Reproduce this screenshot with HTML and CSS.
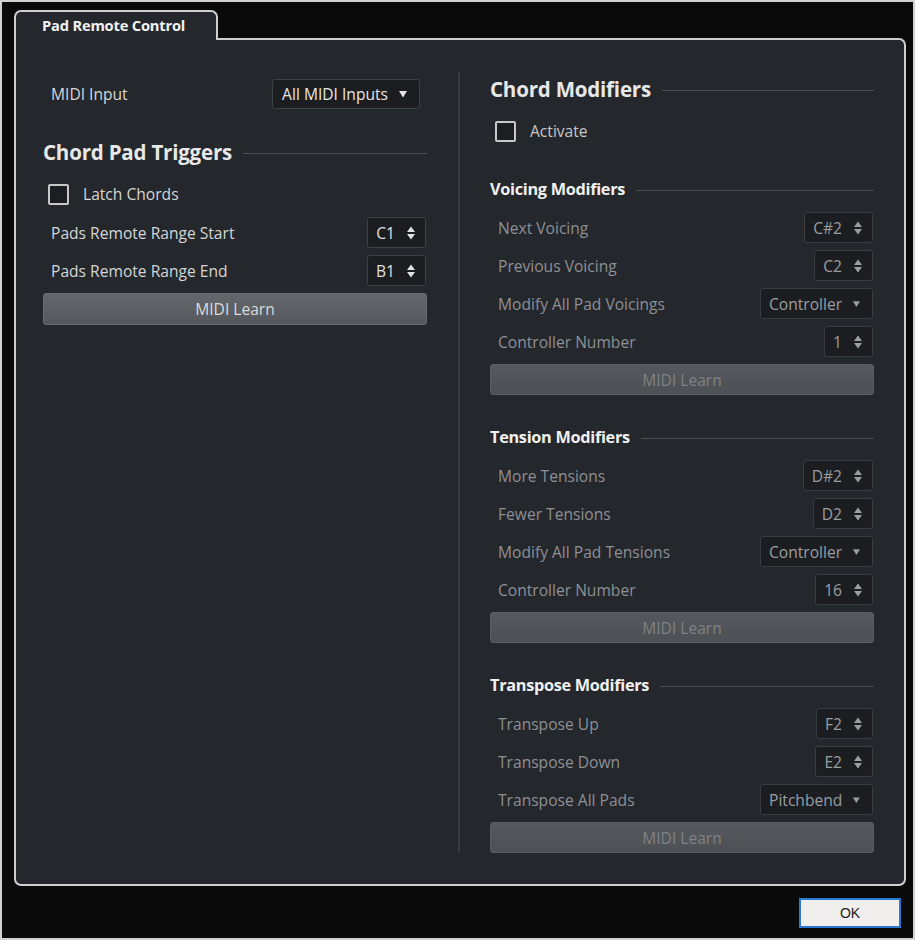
FILE: index.html
```html
<!DOCTYPE html>
<html>
<head>
<meta charset="utf-8">
<link rel="stylesheet" href="styles.css">
</head>
<body>
<div class="window">
  <div class="tabs">
    <div class="tab">Pad Remote Control</div>
  </div>
  <div class="panel">
    <div class="cols">
      <div class="col">
        <div class="row first">
          <span class="label">MIDI Input</span>
          <span class="box drop midi-drop">All MIDI Inputs<svg class="tri" viewBox="0 0 10 8"><path d="M1 1h8L5 7.5z"/></svg></span>
        </div>
        <div class="h2 left-h2"><span>Chord Pad Triggers</span><i class="rule"></i></div>
        <div class="check-row"><span class="cb"></span><span class="cb-label">Latch Chords</span></div>
        <div class="rows first-rows">
          <div class="row"><span class="label">Pads Remote Range Start</span><span class="box spin">C1<svg class="arr" viewBox="0 0 10 16"><path d="M1 7L5 1.5 9 7zM1 9l4 5.5L9 9z"/></svg></span></div>
          <div class="row"><span class="label">Pads Remote Range End</span><span class="box spin">B1<svg class="arr" viewBox="0 0 10 16"><path d="M1 7L5 1.5 9 7zM1 9l4 5.5L9 9z"/></svg></span></div>
          <div class="btn">MIDI Learn</div>
        </div>
      </div>
      <div class="divider"></div>
      <div class="col dim">
        <div class="h2 right-h2"><span>Chord Modifiers</span><i class="rule"></i></div>
        <div class="check-row"><span class="cb"></span><span class="cb-label act">Activate</span></div>

        <div class="h3 first-h3"><span>Voicing Modifiers</span><i class="rule"></i></div>
        <div class="rows">
          <div class="row"><span class="label">Next Voicing</span><span class="box spin">C#2<svg class="arr" viewBox="0 0 10 16"><path d="M1 7L5 1.5 9 7zM1 9l4 5.5L9 9z"/></svg></span></div>
          <div class="row"><span class="label">Previous Voicing</span><span class="box spin">C2<svg class="arr" viewBox="0 0 10 16"><path d="M1 7L5 1.5 9 7zM1 9l4 5.5L9 9z"/></svg></span></div>
          <div class="row"><span class="label">Modify All Pad Voicings</span><span class="box drop sel">Controller<svg class="tri" viewBox="0 0 10 8"><path d="M1 1h8L5 7.5z"/></svg></span></div>
          <div class="row"><span class="label">Controller Number</span><span class="box spin">1<svg class="arr" viewBox="0 0 10 16"><path d="M1 7L5 1.5 9 7zM1 9l4 5.5L9 9z"/></svg></span></div>
          <div class="btn off">MIDI Learn</div>
        </div>

        <div class="h3"><span>Tension Modifiers</span><i class="rule"></i></div>
        <div class="rows">
          <div class="row"><span class="label">More Tensions</span><span class="box spin">D#2<svg class="arr" viewBox="0 0 10 16"><path d="M1 7L5 1.5 9 7zM1 9l4 5.5L9 9z"/></svg></span></div>
          <div class="row"><span class="label">Fewer Tensions</span><span class="box spin">D2<svg class="arr" viewBox="0 0 10 16"><path d="M1 7L5 1.5 9 7zM1 9l4 5.5L9 9z"/></svg></span></div>
          <div class="row"><span class="label">Modify All Pad Tensions</span><span class="box drop sel">Controller<svg class="tri" viewBox="0 0 10 8"><path d="M1 1h8L5 7.5z"/></svg></span></div>
          <div class="row"><span class="label">Controller Number</span><span class="box spin">16<svg class="arr" viewBox="0 0 10 16"><path d="M1 7L5 1.5 9 7zM1 9l4 5.5L9 9z"/></svg></span></div>
          <div class="btn off">MIDI Learn</div>
        </div>

        <div class="h3"><span>Transpose Modifiers</span><i class="rule"></i></div>
        <div class="rows">
          <div class="row"><span class="label">Transpose Up</span><span class="box spin">F2<svg class="arr" viewBox="0 0 10 16"><path d="M1 7L5 1.5 9 7zM1 9l4 5.5L9 9z"/></svg></span></div>
          <div class="row"><span class="label">Transpose Down</span><span class="box spin">E2<svg class="arr" viewBox="0 0 10 16"><path d="M1 7L5 1.5 9 7zM1 9l4 5.5L9 9z"/></svg></span></div>
          <div class="row"><span class="label">Transpose All Pads</span><span class="box drop sel">Pitchbend<svg class="tri" viewBox="0 0 10 8"><path d="M1 1h8L5 7.5z"/></svg></span></div>
          <div class="btn off">MIDI Learn</div>
        </div>
      </div>
    </div>
  </div>
  <div class="footer">
    <div class="ok">OK</div>
  </div>
</div>
</body>
</html>
```

FILE: styles.css
```css
html, body {
  margin: 0;
  padding: 0;
  background: #0b0b0b;
}
body {
  font-family: "Open Sans", "Liberation Sans", sans-serif;
  font-size: 15.6px;
  color: #d6d6d6;
}
.window {
  width: 915px;
  height: 940px;
  box-sizing: border-box;
  border: 2px solid #d2d2d2;
  background: #0a0a0a;
  padding: 8px 7px 0 12px;
  display: flex;
  flex-direction: column;
}
.tabs {
  display: flex;
  height: 28px;
}
.tab {
  position: relative;
  z-index: 1;
  height: 30px;
  box-sizing: border-box;
  border: 2px solid #cfcfcf;
  border-bottom: 0;
  border-radius: 7px 7px 0 0;
  background: #24272c;
  padding: 3px 31px 0 26px;
  font-weight: 700;
  font-size: 14.7px;
  line-height: 20px;
  color: #f2f2f2;
  letter-spacing: -0.2px;
}
.panel {
  height: 848px;
  box-sizing: border-box;
  border: 2px solid #cfcfcf;
  border-radius: 0 7px 7px 7px;
  background: #24272c;
  padding: 32px 30px 0 27px;
}
.cols {
  display: grid;
  grid-template-columns: 384px 63px 384px;
}
.col {
  display: flex;
  flex-direction: column;
}
.divider {
  justify-self: center;
  width: 2px;
  background: #383b40;
  margin-bottom: 1px;
}
.row {
  display: flex;
  align-items: center;
  justify-content: space-between;
  height: 31px;
}
.row.first {
  margin-top: 7px;
  height: 30px;
}
.label {
  padding-left: 8px;
}
.rows {
  display: flex;
  flex-direction: column;
  gap: 7px;
  margin-top: 13px;
}
.rows.first-rows {
  margin-top: 11px;
}
.box {
  display: inline-flex;
  align-items: center;
  height: 100%;
  box-sizing: border-box;
  background: #1b1d21;
  border: 1px solid #3d4045;
  border-radius: 3px;
  margin-right: 1px;
  color: #e0e0e0;
}
.spin {
  padding: 0 9px 0 8px;
}
.arr {
  width: 10px;
  height: 16px;
  fill: #e0e0e0;
  margin-left: 11px;
}
.drop {
  padding: 0 11px 0 8px;
}
.midi-drop {
  margin-right: 7px;
  padding-left: 9px;
  color: #e6e6e6;
}
.sel {
  width: 113px;
  justify-content: space-between;
}
.tri {
  width: 10px;
  height: 8px;
  fill: #e6e6e6;
  margin-left: 10px;
}
.sel .tri {
  width: 9px;
}
.h2, .h3 {
  display: flex;
  align-items: center;
  gap: 11px;
  font-weight: 700;
  color: #e8e8e8;
}
.h2 {
  height: 26px;
  font-size: 20.5px;
  letter-spacing: -0.2px;
}
.left-h2 {
  margin-top: 30px;
}
.right-h2 {
  margin-top: 4px;
}
.h3 {
  height: 20px;
  font-size: 16.3px;
  margin-top: 32px;
  letter-spacing: -0.3px;
  color: #f0f0f0;
}
.h3.first-h3 {
  margin-top: 36px;
}
.rule {
  flex: 1;
  height: 1px;
  background: #4a4d52;
  margin-top: 3px;
}
.check-row {
  display: flex;
  align-items: center;
  height: 24px;
  margin-top: 17px;
  padding-left: 5px;
}
.cb {
  width: 21px;
  height: 21px;
  box-sizing: border-box;
  border: 2px solid #c8c8c8;
  border-radius: 2px;
  background: #1c1e22;
}
.cb-label {
  margin-left: 14px;
}
.cb-label.act {
  color: #c8c8c8;
}
.btn {
  height: 32px;
  box-sizing: border-box;
  display: flex;
  align-items: center;
  justify-content: center;
  border: 1px solid #6a6d71;
  border-radius: 3px;
  background: linear-gradient(#64676b, #55585c);
  color: #dadada;
}
.btn.off {
  height: 31px;
  border-color: #5a5d61;
  background: linear-gradient(#55585c, #4d5054);
  color: #7f8286;
}
.dim .label {
  color: #8d9094;
}
.dim .box {
  color: #9a9da1;
  border-color: #393c41;
}
.dim .arr, .dim .tri {
  fill: #9a9da1;
}
.footer {
  display: flex;
  justify-content: flex-end;
  padding: 12px 5px 0 0;
}
.ok {
  width: 102px;
  height: 30px;
  box-sizing: border-box;
  border: 2px solid #2b78d0;
  background: #f1efed;
  color: #1e1e1e;
  font-family: "Liberation Sans", "Open Sans", sans-serif;
  font-size: 14px;
  display: flex;
  align-items: center;
  justify-content: center;
}
```
